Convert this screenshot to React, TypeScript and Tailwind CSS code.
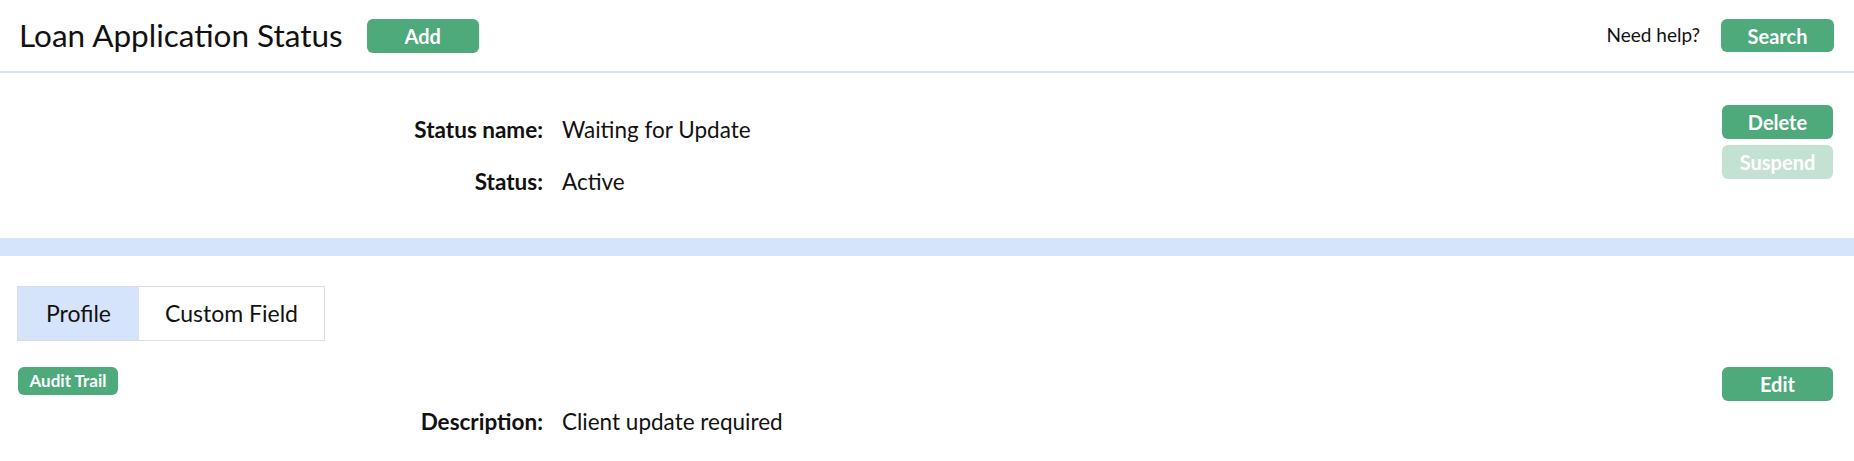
import React from 'react';

const font = { fontFamily: 'Lato, "Noto Sans", sans-serif' };

const GreenButton: React.FC<{ label: string; className?: string; faded?: boolean }> = ({ label, className = '', faded }) => (
  <button
    className={`flex items-center justify-center rounded-[6px] font-bold text-white ${
      faded ? 'bg-[#c4e2d3]' : 'bg-[#4ea97b]'
    } ${className}`}
  >
    {label}
  </button>
);

const Field: React.FC<{ label: string; value: string }> = ({ label, value }) => (
  <div className="flex items-center leading-[34px] text-[#111]">
    <div className="w-[543px] text-right text-[22.5px] font-bold">{label}</div>
    <div className="pl-[19px] text-[22.5px]">{value}</div>
  </div>
);

const App: React.FC = () => {
  return (
    <div className="min-h-screen w-full bg-white" style={font}>
      {/* Header */}
      <div className="flex h-[71px] items-center justify-between pl-[19px] pr-[20px]">
        <div className="flex items-center gap-[24px]">
          <h1 className="text-[31.5px] leading-none text-[#111]">Loan Application Status</h1>
          <GreenButton label="Add" className="h-[34px] w-[112px] text-[20px]" />
        </div>
        <div className="flex items-center gap-[21px]">
          <span className="text-[19px] text-[#111]">Need help?</span>
          <GreenButton label="Search" className="h-[33px] w-[113px] text-[20px]" />
        </div>
      </div>
      <div className="h-[2px] bg-[#d6e4fb]" />

      {/* Details */}
      <div className="flex h-[165px] justify-between pr-[21px]">
        <div className="flex flex-col gap-[18px] pt-[40px]">
          <Field label="Status name:" value="Waiting for Update" />
          <Field label="Status:" value="Active" />
        </div>
        <div className="flex flex-col gap-[6px] pt-[32px]">
          <GreenButton label="Delete" className="h-[34px] w-[111px] text-[20px]" />
          <GreenButton label="Suspend" faded className="h-[34px] w-[111px] text-[20px]" />
        </div>
      </div>
      <div className="h-[18px] bg-[#d6e4fb]" />

      {/* Lower section */}
      <div className="pl-[17px] pr-[21px] pt-[30px]">
        <div className="flex h-[55px] w-[308px] border border-[#dddddd] text-[23px] text-[#111]">
          <div className="flex w-[121px] items-center justify-center bg-[#d6e4fb]">Profile</div>
          <div className="flex flex-1 items-center justify-center">Custom Field</div>
        </div>
        <div className="mt-[26px] flex items-start justify-between">
          <GreenButton label="Audit Trail" className="ml-[1px] h-[28px] w-[100px] text-[17px]" />
          <GreenButton label="Edit" className="h-[34px] w-[111px] text-[20px]" />
        </div>
        <div className="-ml-[17px] mt-[4px]">
          <Field label="Description:" value="Client update required" />
        </div>
      </div>
    </div>
  );
};

export default App;
